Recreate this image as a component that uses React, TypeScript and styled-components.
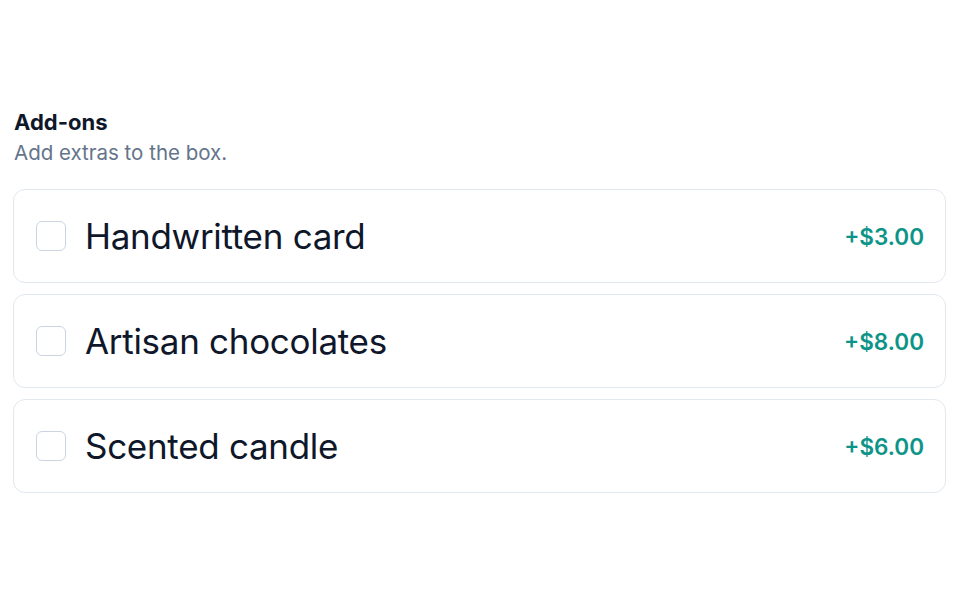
import styled, { createGlobalStyle } from "styled-components";

const GlobalStyle = createGlobalStyle`
  body {
    margin: 0;
    background: #ffffff;
    font-family: Inter, "Noto Sans", sans-serif;
  }
`;

const Page = styled.div`
  padding: 108px 14px 0 13px;
`;

const Header = styled.div`
  padding-left: 1px;
  margin-bottom: 23px;
`;

const Title = styled.h2`
  margin: 0;
  font-size: 22px;
  line-height: 28px;
  font-weight: 700;
  color: #0f172a;
`;

const Subtitle = styled.p`
  margin: 4px 0 0;
  font-size: 20.5px;
  line-height: 26px;
  color: #64748b;
`;

const List = styled.div`
  display: flex;
  flex-direction: column;
  gap: 11px;
`;

const Option = styled.label`
  display: flex;
  align-items: center;
  gap: 19px;
  height: 94px;
  box-sizing: border-box;
  padding: 0 21px 0 22px;
  border: 1.5px solid #e2e8f0;
  border-radius: 12px;
  background: #fff;
  cursor: pointer;
`;

const Box = styled.span`
  width: 30px;
  height: 30px;
  box-sizing: border-box;
  border: 1.5px solid #cbd5e1;
  border-radius: 6px;
  flex-shrink: 0;
`;

const Name = styled.span`
  flex: 1;
  font-size: 35px;
  letter-spacing: -0.3px;
  color: #0f172a;
`;

const Price = styled.span`
  font-size: 22.5px;
  font-weight: 600;
  color: #0d9488;
`;

const addons = [
  { name: "Handwritten card", price: "+$3.00" },
  { name: "Artisan chocolates", price: "+$8.00" },
  { name: "Scented candle", price: "+$6.00" },
];

export default function App() {
  return (
    <>
      <GlobalStyle />
      <Page>
        <Header>
          <Title>Add-ons</Title>
          <Subtitle>Add extras to the box.</Subtitle>
        </Header>
        <List>
          {addons.map((a) => (
            <Option key={a.name}>
              <Box />
              <Name>{a.name}</Name>
              <Price>{a.price}</Price>
            </Option>
          ))}
        </List>
      </Page>
    </>
  );
}
